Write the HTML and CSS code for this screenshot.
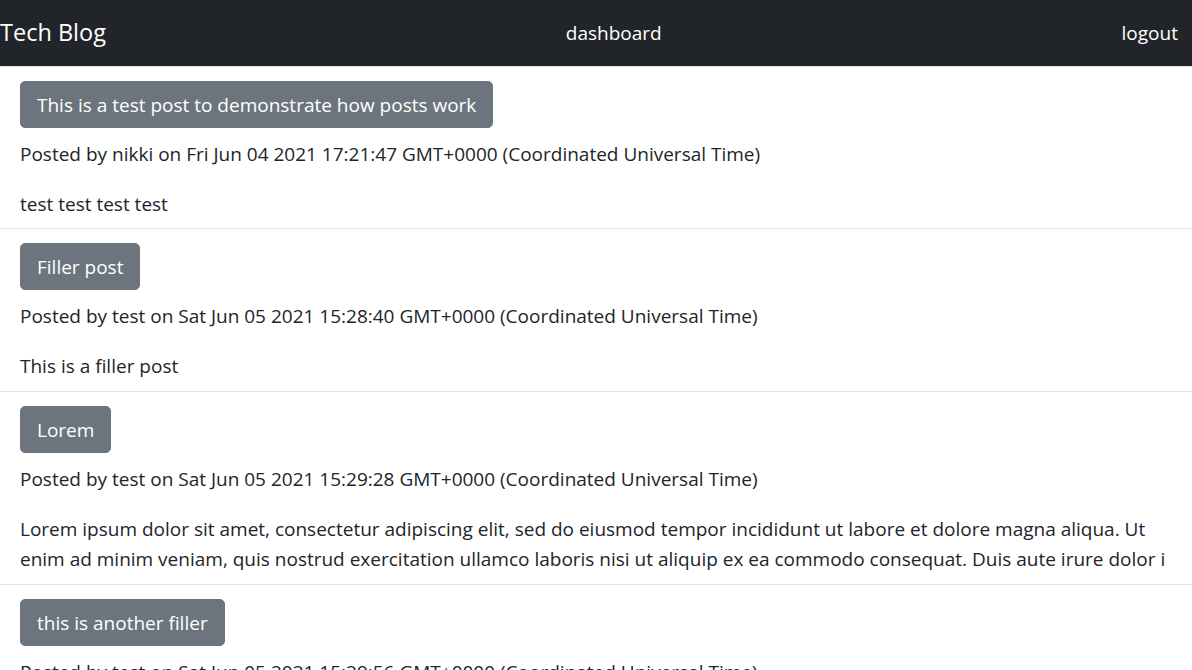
FILE: index.html
```html
<!DOCTYPE html>
<html lang="en">
<head>
<meta charset="utf-8">
<title>Tech Blog</title>
<link rel="stylesheet" href="styles.css">
</head>
<body>
<nav class="navbar">
  <a class="brand" href="#">Tech Blog</a>
  <a class="nav-link" href="#">dashboard</a>
  <a class="nav-link" href="#">logout</a>
</nav>
<main>
  <section class="post">
    <button class="btn">This is a test post to demonstrate how posts work</button>
    <p class="meta">Posted by nikki on Fri Jun 04 2021 17:21:47 GMT+0000 (Coordinated Universal Time)</p>
    <p class="body">test test test test</p>
  </section>
  <section class="post">
    <button class="btn">Filler post</button>
    <p class="meta">Posted by test on Sat Jun 05 2021 15:28:40 GMT+0000 (Coordinated Universal Time)</p>
    <p class="body">This is a filler post</p>
  </section>
  <section class="post">
    <button class="btn">Lorem</button>
    <p class="meta">Posted by test on Sat Jun 05 2021 15:29:28 GMT+0000 (Coordinated Universal Time)</p>
    <p class="body">Lorem ipsum dolor sit amet, consectetur adipiscing elit, sed do eiusmod tempor incididunt ut labore et dolore magna aliqua. Ut enim ad minim veniam, quis nostrud exercitation ullamco laboris nisi ut aliquip ex ea commodo consequat. Duis aute irure dolor i</p>
  </section>
  <section class="post">
    <button class="btn">this is another filler</button>
    <p class="meta">Posted by test on Sat Jun 05 2021 15:29:56 GMT+0000 (Coordinated Universal Time)</p>
    <p class="body">this is another filler post</p>
  </section>
</main>
</body>
</html>
```
FILE: styles.css
```css
* { box-sizing: border-box; }
html, body { margin: 0; padding: 0; }
body {
  font-family: "Open Sans", "Noto Sans", sans-serif;
  font-size: 19px;
  line-height: 30px;
  color: #212529;
  background: #fff;
}
.navbar {
  height: 67px;
  background: #212529;
  display: flex;
  align-items: center;
  justify-content: space-between;
  padding: 0 14px 1px 0;
  border-bottom: 1px solid #dee2e6;
}
.navbar a {
  color: #fff;
  text-decoration: none;
}
.brand {
  font-size: 23.5px;
  line-height: 37px;
}
.nav-link {
  font-size: 19px;
}
.post {
  padding: 14px 20px 10px;
  border-bottom: 1px solid #dee2e6;
}
.post:first-child {
  padding-bottom: 9px;
}
.btn {
  display: inline-block;
  font-family: inherit;
  font-size: 19px;
  line-height: 30px;
  color: #fff;
  background: #6c757d;
  border: 1px solid #6c757d;
  border-radius: 5px;
  padding: 7.5px 16px;
  margin: 0 0 11px;
  cursor: pointer;
}
.post p { margin: 0; }
.meta { margin-bottom: 20px !important; }
```
